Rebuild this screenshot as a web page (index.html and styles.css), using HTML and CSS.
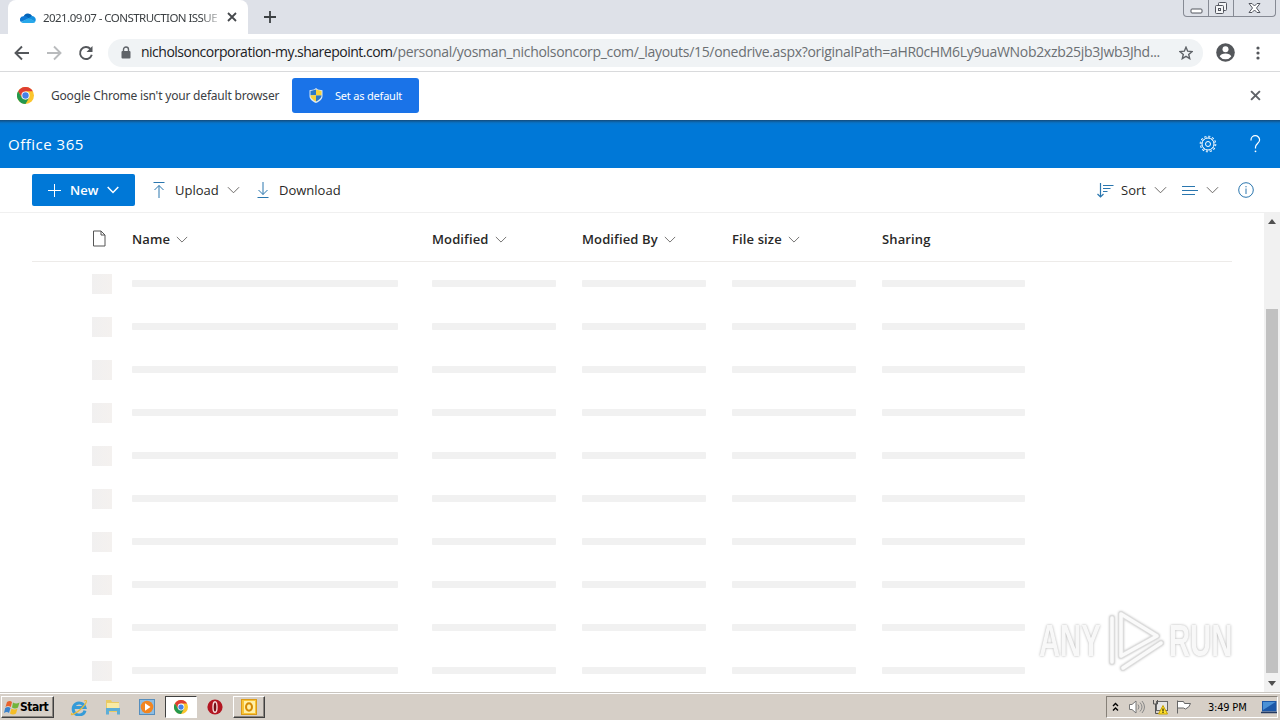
FILE: index.html
```html
<!DOCTYPE html>
<html lang="en">
<head>
  <meta charset="UTF-8" />
  <meta name="viewport" content="width=device-width, initial-scale=1.0"/>
  <title>OneDrive</title>
  <link rel="stylesheet" href="styles.css">
</head>
<body>

<!-- Shared icons -->
<svg class="defs" width="0" height="0">
  <symbol id="chevron" viewBox="0 0 14 8"><path d="M1 1l6 6 6-6" fill="none" stroke="currentColor"/></symbol>
  <symbol id="close" viewBox="0 0 10 10"><path d="M1 1l8 8M9 1L1 9" fill="none" stroke="currentColor" stroke-width="1.8"/></symbol>
  <symbol id="chrome" viewBox="0 0 24 24">
    <circle cx="12" cy="12" r="12" fill="#fbc52d"/>
    <path d="M12 6h10.4A12 12 0 0 0 1.6 6L7 15z" fill="#df3e32"/>
    <path d="M1.6 6A12 12 0 0 0 12 24l5.2-9L12 17.5 7 15z" fill="#24984e"/>
    <circle cx="12" cy="12" r="5.8" fill="#fff"/>
    <circle cx="12" cy="12" r="4.5" fill="#4581e8"/>
  </symbol>
</svg>

<!-- Tab strip -->
<div class="tabs">
  <div class="tab">
    <svg class="cloud" width="16" height="11" viewBox="0 0 16 11">
      <path d="M3.5 5A4.7 4.7 0 0 1 12.2 4L9 9z" fill="#0364b8"/>
      <path d="M3.3 4.3A3.3 3.3 0 0 0 1 10l8-3.5-2.5-2A4 4 0 0 0 3.3 4.3z" fill="#0f78d4"/>
      <path d="M8.5 6.2l3-2A3.5 3.5 0 0 1 15 9.7z" fill="#1490df"/>
      <path d="M1 10l7.6-4 6.8 3.4A2.7 2.7 0 0 1 13 11H3.3A3 3 0 0 1 1 10z" fill="#28a8ea"/>
    </svg>
    <span class="tab-title">2021.09.07 - CONSTRUCTION ISSUE</span>
    <svg class="tab-close" width="10" height="10"><use href="#close"/></svg>
  </div>
  <svg class="new-tab" width="12" height="12" viewBox="0 0 12 12"><path d="M6 0v12M0 6h12" stroke="#3c4043" stroke-width="1.8"/></svg>
  <div class="window-buttons">
    <span class="win min"><svg width="13" height="6" viewBox="0 0 13 6"><rect x="1" y="1" width="11" height="4" rx="1" fill="#fff" stroke="#53565f"/></svg></span>
    <span class="win"><svg width="14" height="14" viewBox="0 0 14 14" fill="#f4f5f7" stroke="#53565f"><rect x="4.500" y="1.500" width="8" height="8" rx="1"/><rect x="1.500" y="4.500" width="8" height="8" rx="1"/><rect x="4.500" y="7.500" width="2" height="2"/></svg></span>
    <span class="win wide"><svg width="13" height="12" viewBox="0 0 13 12"><path d="M1 1.500h3l2.500 2.500L9 1.500h3L8.500 6l3.500 4.500H9L6.500 8 4 10.500H1L4.500 6z" fill="#fff" stroke="#53565f"/></svg></span>
  </div>
</div>

<!-- Address bar -->
<div class="toolbar">
  <svg class="nav" width="16" height="16" viewBox="0 0 16 16"><path d="M15 8H2M8 1.500L1.500 8 8 14.500" fill="none" stroke="#54575b" stroke-width="1.900"/></svg>
  <svg class="nav" width="16" height="16" viewBox="0 0 16 16"><path d="M1 8h13M8 1.500L14.500 8 8 14.500" fill="none" stroke="#b9bbbd" stroke-width="1.900"/></svg>
  <svg class="nav" width="16" height="16" viewBox="0 0 16 16"><path d="M13.800 9.800A6 6 0 1 1 12.500 4" fill="none" stroke="#54575b" stroke-width="1.900"/><path d="M14.500 1v6h-6z" fill="#54575b"/></svg>
  <div class="omnibox">
    <svg width="10" height="13" viewBox="0 0 10 13"><rect x="0.500" y="5" width="9" height="7.500" rx="1" fill="#5f6368"/><path d="M2.500 5.500V3.500a2.500 2.500 0 0 1 5 0v2" fill="none" stroke="#5f6368" stroke-width="1.400"/></svg>
    <div class="url"><span class="host">nicholsoncorporation-my.sharepoint.com</span><span class="path">/personal/yosman_nicholsoncorp_com/_layouts/15/onedrive.aspx?originalPath=aHR0cHM6Ly9uaWNob2xzb25jb3Jwb3Jhd...</span></div>
    <svg class="star" width="14" height="14" viewBox="0 0 14 14"><path d="M7 1.200l1.700 4 4.300.4-3.300 2.800 1 4.200L7 10.300l-3.700 2.300 1-4.200L1 5.600l4.300-.4z" fill="none" stroke="#5f6368" stroke-width="1.400"/></svg>
  </div>
  <svg class="account" width="19" height="19" viewBox="0 0 19 19"><circle cx="9.500" cy="9.500" r="9.300" fill="#54575b"/><circle cx="9.500" cy="6.300" r="3" fill="#fff"/><path d="M3.700 13.500c1-4 10.600-4 11.600 0a7.300 7.300 0 0 1-11.600 0z" fill="#fff"/></svg>
  <svg class="dots" width="4" height="14" viewBox="0 0 4 14" fill="#54575b"><circle cx="2" cy="2" r="1.600"/><circle cx="2" cy="7" r="1.600"/><circle cx="2" cy="12" r="1.600"/></svg>
</div>

<!-- Default browser bar -->
<div class="infobar">
  <svg width="17" height="17"><use href="#chrome"/></svg>
  <span class="info-text">Google Chrome isn't your default browser</span>
  <button class="default-btn">
    <svg width="14" height="15" viewBox="0 0 14 15"><path d="M7 0l2 1.500 4.500.7V8c0 3.500-3 5.500-6.500 7C3.500 13.500.5 11.500.5 8V2.200L5 1.500z" fill="#dbe8f4"/><path d="M7 1.500v5.800H1.500V3zM7 7.300h5.500C12.500 10.500 9.500 12.300 7 13.500z" fill="#2c79c6"/><path d="M7 1.500L12.500 3v4.300H7zM1.500 7.300H7v6.200c-2.500-1.200-5.500-3-5.500-6.200z" fill="#f8d238"/></svg>
    <span>Set as default</span>
  </button>
  <svg class="info-close" width="11" height="11"><use href="#close"/></svg>
</div>

<!-- Suite header -->
<div class="suite">
  <span class="brand">Office 365</span>
  <svg class="gear" width="18" height="18" viewBox="0 0 18 18" fill="none" stroke="#fff">
    <circle cx="9" cy="9" r="6"/>
    <circle cx="9" cy="9" r="7.300" stroke-width="2" stroke-dasharray="2 1.822"/>
    <circle cx="9" cy="9" r="7.100" stroke="#0078d7" stroke-width="1" stroke-dasharray="1 2.718" stroke-dashoffset="-.5"/>
    <circle cx="9" cy="9" r="2.500"/>
  </svg>
  <svg width="11" height="18" viewBox="0 0 11 18"><path d="M1 5.500V5a4.300 4.300 0 0 1 8.600 0c0 3-4.100 4-4.100 7v1.500" fill="none" stroke="#fff" stroke-width="1.200"/><circle cx="5.500" cy="16.300" r=".9" fill="#fff"/></svg>
</div>

<!-- Command bar -->
<div class="commands">
  <button class="new-btn">
    <svg width="13" height="13" viewBox="0 0 13 13"><path d="M6.500 0v13M0 6.500h13" stroke="#fff"/></svg>
    <span>New</span>
    <svg width="12" height="8" viewBox="0 0 12 8"><path d="M.7 1L6 6.500 11.300 1" fill="none" stroke="#fff" stroke-width="1.500"/></svg>
  </button>
  <div class="cmd upload">
    <svg class="blue" width="12" height="16" viewBox="0 0 12 16"><path d="M.5 .5h11M6 16V3.500M1.500 8L6 3.500 10.500 8" fill="none" stroke="currentColor"/></svg>
    <span>Upload</span>
    <svg class="grey" width="13" height="8"><use href="#chevron"/></svg>
  </div>
  <div class="cmd download">
    <svg class="blue" width="12" height="16" viewBox="0 0 12 16"><path d="M.5 15.500h11M6 0v12.500M1.500 8L6 12.500 10.500 8" fill="none" stroke="currentColor"/></svg>
    <span>Download</span>
  </div>
  <div class="cmd sort">
    <svg class="blue" width="17" height="15" viewBox="0 0 17 15"><path d="M3.500 0v14M.5 11l3 3 3-3M6 2.500h10.500M6 5.500h7.500M6 8.500h4.500" fill="none" stroke="currentColor" stroke-width="1.200"/></svg>
    <span>Sort</span>
    <svg class="grey" width="13" height="8"><use href="#chevron"/></svg>
  </div>
  <div class="cmd view">
    <svg class="blue" width="16" height="9" viewBox="0 0 16 9"><path d="M0 .5h13M0 4.500h16M0 8.500h13" stroke="currentColor"/></svg>
    <svg class="grey" width="13" height="8"><use href="#chevron"/></svg>
  </div>
  <svg class="blue info" width="16" height="16" viewBox="0 0 16 16"><circle cx="8" cy="8" r="7.300" fill="none" stroke="currentColor"/><path d="M8 6.500V12M8 4v1.300" stroke="currentColor"/></svg>
</div>

<!-- File list -->
<div class="content">
  <div class="list" id="list">
    <div class="row head">
      <svg width="14" height="17" viewBox="0 0 14 17"><path d="M1.500 1h7.500l4 4v11H1.500zM9 1v4h4" fill="none" stroke="#555"/></svg>
      <div>Name<svg width="12" height="7"><use href="#chevron"/></svg></div>
      <div>Modified<svg width="12" height="7"><use href="#chevron"/></svg></div>
      <div>Modified By<svg width="12" height="7"><use href="#chevron"/></svg></div>
      <div>File size<svg width="12" height="7"><use href="#chevron"/></svg></div>
      <div>Sharing</div>
    </div>
  </div>
  <div class="scrollbar">
    <span class="arrow up"></span>
    <span class="thumb"></span>
    <span class="arrow down"></span>
  </div>
  <div class="watermark">
    <span>ANY</span>
    <svg width="58" height="64" viewBox="0 0 58 64" fill="none" stroke-linejoin="round" stroke-linecap="round">
      <g stroke="#dcdcdc" stroke-width="6"><path d="M5 9v44M14 5v42l36-20z"/><path d="M16 59l38-25"/></g>
      <g stroke="#fafafa" stroke-width="3.500"><path d="M5 9v44M14 5v42l36-20z"/><path d="M16 59l38-25"/></g>
    </svg>
    <span>RUN</span>
  </div>
</div>

<!-- Taskbar -->
<div class="taskbar">
  <div class="start">
    <svg width="16" height="15" viewBox="0 0 16 15"><path d="M3 2q3-2 5 0L6.800 7Q4 5 1.500 7z" fill="#e8622c"/><path d="M9 2.500q3 2 6.500 0L14 7.500q-3 2-6 0z" fill="#72b43a"/><path d="M1.200 8q3-2 5.300 0L5 13q-2-2-5 0z" fill="#3a82cc"/><path d="M7.500 8.500q3 2 6 0L12 13.500q-3 2-6 0z" fill="#f4bd27"/></svg>
    <span>Start</span>
  </div>
  <div class="apps">
    <span class="app"><svg width="18" height="17" viewBox="0 0 18 17" fill="none"><path d="M15 11.500A6 6 0 1 1 15 8.500H4" stroke="#369bd8" stroke-width="3"/><path d="M2 14C-1 18 7 14 12 9s6-9 2-7" stroke="#e9bb3b" stroke-width="1.200"/></svg></span>
    <span class="app"><svg width="16" height="16" viewBox="0 0 16 16"><path d="M1 1h5l1 2h7v10H1z" fill="#e9ca64"/><path d="M2 4h12v5H2z" fill="#f9eaa4"/><path d="M1 15.500V9h14v6.500h-3V12H4v3.500z" fill="#5daed7"/></svg></span>
    <span class="app"><svg width="16" height="16" viewBox="0 0 16 16"><rect x=".5" y=".5" width="15" height="15" fill="#8dbde3" stroke="#568ebd"/><circle cx="8" cy="8" r="6.300" fill="#f28520"/><path d="M6 4.300v7.400l5.500-3.700z" fill="#fff"/></svg></span>
    <span class="app active"><svg width="14" height="14"><use href="#chrome"/></svg></span>
    <span class="app"><svg width="16" height="16" viewBox="0 0 16 16"><circle cx="8" cy="8" r="7.600" fill="#b31622"/><ellipse cx="8" cy="8" rx="2" ry="5.300" fill="#751017" stroke="#f6dada" stroke-width="1.400"/></svg></span>
    <span class="app raised"><svg width="16" height="16" viewBox="0 0 16 16"><rect x=".5" y=".5" width="15" height="15" fill="#f8c437" stroke="#dc9b16"/><rect x="3" y="2" width="11" height="12" fill="#fff0a8"/><ellipse cx="8" cy="8" rx="3" ry="3.700" fill="none" stroke="#d48a05" stroke-width="2"/></svg></span>
  </div>
  <div class="tray">
    <svg class="more" width="7" height="10" viewBox="0 0 7 10"><path d="M1 4l2.500-2.500L6 4M1 8.500L3.500 6 6 8.500" fill="none" stroke="#000" stroke-width="1.400"/></svg>
    <svg width="17" height="16" viewBox="0 0 17 16"><path d="M1.500 5.500h2.500L8 2v12l-4-3.500H1.500z" fill="#fff" stroke="#777"/><path d="M10 5.500q2 2.500 0 5M12 3.500q4 4.500 0 9M14 2q5 6 0 12" fill="none" stroke="#888"/></svg>
    <svg width="16" height="16" viewBox="0 0 16 16"><rect x="4.500" y="2.500" width="11" height="9" fill="#e5e5e5" stroke="#666"/><path d="M1.500 1v4h4V1M3.500 5v9.500H7" fill="none" stroke="#555"/><path d="M11 6.500l4.500 8.500h-9z" fill="#ffe22e" stroke="#c6a000"/><path d="M11 9.500v3M11 13v1" stroke="#000"/></svg>
    <svg width="17" height="16" viewBox="0 0 17 16"><path d="M2.500 1.500v13M2.500 2.500h6l1 2h6q-1 4-5 5.500l-2-1h-6" fill="#fff" stroke="#666"/></svg>
    <span class="clock">3:49 PM</span>
    <svg width="16" height="13" viewBox="0 0 16 13"><path d="M1 0h14.500v10.500H1z" fill="#1c57a7"/><path d="M2 1h12.500L2 9z" fill="#4b91d6"/><path d="M0 11.500h16" stroke="#243a61" stroke-width="1.500"/></svg>
  </div>
</div>

<script>
  const list = document.getElementById("list");
  for (let i = 0; i < 10; i++) {
    const row = document.createElement("div");
    row.className = "row";
    row.innerHTML = '<span class="thumb-box"></span>' + '<span class="bar"></span>'.repeat(5);
    list.appendChild(row);
  }
</script>

</body>
</html>
```
FILE: styles.css
```css
* {
  margin: 0;
  padding: 0;
  box-sizing: border-box;
}

body {
  width: 1280px;
  height: 720px;
  overflow: hidden;
  display: flex;
  flex-direction: column;
  font-family: "Open Sans", sans-serif;
  background: #fff;
  color: #292827;
}

svg {
  flex: none;
  display: block;
}

button {
  border: none;
  font-family: inherit;
}

.defs {
  position: absolute;
}

/* tab strip */
.tabs {
  height: 34px;
  flex: none;
  background: #dee1e8;
  display: flex;
  padding-left: 8px;
}

.tab {
  width: 240px;
  height: 34px;
  background: #fff;
  border-radius: 8px 8px 0 0;
  display: flex;
  align-items: center;
  padding-left: 12px;
}

.tab-title {
  width: 176px;
  margin-left: 7px;
  overflow: hidden;
  white-space: nowrap;
  font: 11.5px "Noto Sans", sans-serif;
  letter-spacing: -0.55px;
  color: #3c4043;
  -webkit-mask-image: linear-gradient(to right, #000 90%, rgba(0, 0, 0, 0.2));
  mask-image: linear-gradient(to right, #000 90%, rgba(0, 0, 0, 0.2));
}

.tab-close {
  margin-left: 8px;
  color: #45484c;
}

.new-tab {
  margin: 11px 0 0 16px;
}

.window-buttons {
  margin-left: auto;
  margin-right: 4px;
  width: 93px;
  height: 17px;
  display: flex;
  border: 1px solid #868a94;
  border-top: none;
  border-radius: 0 0 4px 4px;
}

.win {
  width: 25px;
  display: flex;
  align-items: center;
  justify-content: center;
  border-right: 1px solid #868a94;
}

.win.min {
  align-items: flex-end;
  padding-bottom: 2px;
}

.win.wide {
  flex: 1;
  border-right: none;
}

/* address bar */
.toolbar {
  height: 38px;
  flex: none;
  display: flex;
  align-items: center;
  padding-left: 14px;
  border-bottom: 1px solid #d9dadc;
}

.nav {
  margin-right: 16px;
}

.omnibox {
  width: 1095px;
  height: 28px;
  margin-left: -2px;
  border-radius: 14px;
  background: #f0f3f5;
  display: flex;
  align-items: center;
  padding-left: 13px;
}

.url {
  width: 1024px;
  margin: -2px 0 0 10px;
  white-space: nowrap;
  font-size: 14px;
  color: #6b6f73;
}

.host {
  color: #202124;
  letter-spacing: -0.5px;
}

.path {
  letter-spacing: -0.31px;
}

.star {
  margin-left: 14px;
}

.account {
  margin-left: 13px;
}

.dots {
  margin-left: 21px;
}

/* default browser bar */
.infobar {
  height: 48px;
  flex: none;
  display: flex;
  align-items: center;
  padding: 0 19px 1px 17px;
}

.info-text {
  width: 229px;
  margin-left: 17px;
  white-space: nowrap;
  font: 12px "Noto Sans", sans-serif;
  letter-spacing: -0.19px;
  color: #3c4043;
}

.default-btn {
  width: 127px;
  height: 35px;
  margin-left: 12px;
  border-radius: 3px;
  background: #1a73e8;
  color: #fff;
  display: flex;
  align-items: center;
  padding-left: 17px;
  gap: 12px;
  font: 11px "Noto Sans", sans-serif;
  letter-spacing: -0.2px;
  white-space: nowrap;
}

.info-close {
  margin-left: auto;
  color: #5f6368;
}

/* suite header */
.suite {
  height: 48px;
  flex: none;
  background: linear-gradient(#144c7d, #0874c9 3px, #0078d7 5px);
  color: #fff;
  display: flex;
  align-items: center;
  padding: 0 19px 0 8px;
}

.brand {
  font-size: 15px;
  font-weight: 500;
  letter-spacing: 0.5px;
}

.gear {
  margin-left: auto;
  margin-right: 33px;
}

/* command bar */
.commands {
  height: 45px;
  flex: none;
  display: flex;
  align-items: center;
  padding: 0 26px 0 32px;
  border-bottom: 1px solid #f0f0f0;
  font-size: 13px;
}

.new-btn {
  width: 103px;
  height: 32px;
  background: #0078d7;
  color: #fff;
  border-radius: 2px;
  display: flex;
  align-items: center;
  padding-left: 16px;
  gap: 9px;
  font-size: 13px;
  font-weight: 600;
}

.cmd {
  display: flex;
  align-items: center;
}

.blue {
  color: #2a76ae;
}

.grey {
  color: #605e5c;
}

.upload {
  width: 87px;
  margin-left: 18px;
}

.upload span {
  width: 44px;
  margin: 0 8px 0 10px;
}

.download {
  margin-left: 17px;
  gap: 10px;
}

.sort {
  margin-left: auto;
  width: 70px;
}

.sort span {
  width: 26px;
  margin: 0 7px;
}

.view {
  gap: 8px;
  margin: 0 19px 0 15px;
}

/* file list */
.content {
  position: relative;
  height: 479px;
  flex: none;
  display: flex;
  justify-content: space-between;
  padding-left: 32px;
}

.list {
  width: 1200px;
}

.row {
  height: 43px;
  display: grid;
  grid-template-columns: 40px 300px 150px 150px 150px 200px;
  align-items: center;
  padding-left: 60px;
}

.row.head {
  height: 49px;
  padding-bottom: 1px;
  border-bottom: 1px solid #edebe9;
  font-size: 13px;
  font-weight: 600;
  letter-spacing: 0.12px;
}

.head div {
  display: flex;
  align-items: center;
  padding-top: 5px;
}

.head > svg {
  margin-top: 4px;
}

.head div svg {
  margin-left: 6px;
  color: #605e5c;
}

.thumb-box {
  width: 20px;
  height: 20px;
  background: linear-gradient(90deg, #f1f0f0, #f4f1ef);
}

.bar {
  width: 124px;
  height: 7px;
  border-radius: 1px;
  background: #f1f1f1;
}

.bar:nth-child(2) {
  width: 266px;
}

.bar:last-child {
  width: 143px;
}

.scrollbar {
  width: 16px;
  background: #f1f1f1;
  display: flex;
  flex-direction: column;
  align-items: center;
}

.arrow {
  border: 4px solid transparent;
}

.arrow.up {
  margin-top: 2px;
  border-bottom: 5px solid #505050;
}

.arrow.down {
  margin-top: 8px;
  border-top: 5px solid #505050;
}

.thumb {
  width: 12px;
  height: 364px;
  margin-top: 85px;
  background: #c1c1c1;
}

.watermark {
  position: absolute;
  left: 1039px;
  top: 395px;
  height: 66px;
  display: flex;
  align-items: center;
  font: bold 45px "Liberation Sans", sans-serif;
  color: #f8f8f8;
  text-shadow: 0 0 3px #aaa;
}

.watermark svg {
  margin: 0 4px;
  filter: drop-shadow(0 0 1px #ccc);
}

.watermark span {
  width: 64px;
  transform: scaleX(0.65);
  transform-origin: left;
}

/* taskbar */
.taskbar {
  height: 28px;
  flex: none;
  background: #d6cfc7;
  border-top: 1px solid #c9c5bf;
  box-shadow: inset 0 1px #fff;
  display: flex;
  align-items: center;
  padding: 1px 2px 0 1px;
  font-family: "DejaVu Sans Condensed", "DejaVu Sans", sans-serif;
}

.start {
  width: 53px;
  height: 22px;
  border: 1px solid;
  border-color: #fff #404040 #404040 #fff;
  box-shadow: inset -1px -1px #8b8680;
  display: flex;
  align-items: center;
  padding-left: 2px;
  font-size: 12px;
  font-weight: bold;
  letter-spacing: -0.5px;
  color: #000;
}

.apps {
  display: flex;
  margin-left: 9px;
  gap: 2px;
}

.app {
  width: 32px;
  height: 22px;
  display: flex;
  align-items: center;
  justify-content: center;
}

.app.active {
  background: #fff;
  border: 1px solid;
  border-color: #404040 #fff #fff #404040;
}

.app.raised {
  border: 1px solid;
  border-color: #fff #404040 #404040 #fff;
  box-shadow: inset -1px -1px #8b8680;
}

.tray {
  width: 172px;
  height: 22px;
  margin-left: auto;
  border: 1px solid;
  border-color: #868078 #fff #fff #868078;
  display: flex;
  align-items: center;
  padding-left: 5px;
  gap: 7px;
}

.more {
  margin-right: 2px;
}

.clock {
  width: 42px;
  margin: 0 4px 0 9px;
  white-space: nowrap;
  font-size: 11px;
  letter-spacing: -0.2px;
  color: #000;
}
```
